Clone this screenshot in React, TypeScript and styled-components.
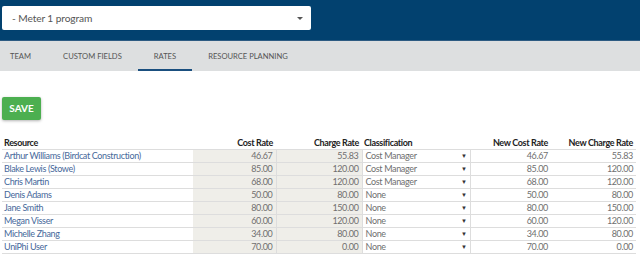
import React from "react";
import styled, { createGlobalStyle } from "styled-components";

const Global = createGlobalStyle`
  body {
    margin: 0;
    background: #fff;
    font-family: "Lato", "Open Sans", sans-serif;
  }
`;

const Header = styled.div`
  height: 41px;
  background: #02416f;
  border-bottom: 1px solid #2d5b82;
  box-sizing: border-box;
  padding: 6px 329px 0 2px;
`;

const ProgramSelect = styled.div`
  display: flex;
  align-items: center;
  height: 24px;
  background: #fff;
  border-radius: 2px;
  padding: 0 8px 0 10px;
  font-size: 10.2px;
  letter-spacing: -0.1px;
  color: #555;
`;

const Caret = styled.span`
  margin-left: auto;
  width: 0;
  height: 0;
  border-left: 3px solid transparent;
  border-right: 3px solid transparent;
  border-top: 3px solid #555;
`;

const TabBar = styled.div`
  display: flex;
  height: 30px;
  background: #dddfe0;
`;

const Tab = styled.div<{ $active?: boolean }>`
  display: flex;
  align-items: center;
  padding: 2px 16px 0;
  font-size: 7.6px;
  text-transform: uppercase;
  color: #555;
  border-bottom: 2px solid ${(p) => (p.$active ? "#1a4f7f" : "transparent")};
  box-sizing: border-box;

  &:first-child {
    padding-left: 10px;
  }
`;

const Content = styled.div`
  padding: 25px 2px 0;
`;

const SaveButton = styled.button`
  width: 39px;
  height: 23px;
  border: none;
  border-radius: 2px;
  background: #4caf50;
  color: #fff;
  font-family: "Lato", sans-serif;
  font-weight: 700;
  font-size: 10px;
  box-shadow: 0 1px 3px rgba(0, 0, 0, 0.3);
  padding: 0;
`;

const Table = styled.table`
  margin-top: 17px;
  width: 634px;
  border-collapse: collapse;
  table-layout: fixed;
  font-size: 9px;
  letter-spacing: -0.35px;
  line-height: 12px;
`;

const Th = styled.th<{ $w: number; $right?: boolean }>`
  box-sizing: border-box;
  width: ${(p) => p.$w}px;
  text-align: ${(p) => (p.$right ? "right" : "left")};
  font-weight: 700;
  color: #222;
  height: 13px;
  padding: 0 3px 0 2px;
  border-bottom: 1px solid #ddd;
  white-space: nowrap;
`;

const Td = styled.td<{ $right?: boolean; $locked?: boolean; $divider?: boolean }>`
  box-sizing: border-box;
  height: 13px;
  padding: 0 3px 0 2px;
  text-align: ${(p) => (p.$right ? "right" : "left")};
  background: ${(p) => (p.$locked ? "#efeee9" : "transparent")};
  color: #6f6f6f;
  border-bottom: 1px solid #ddd;
  border-right: ${(p) => (p.$divider ? "1px solid #ddd" : "none")};
  white-space: nowrap;
  overflow: hidden;
`;

const NameLink = styled.span`
  color: #46689a;
`;

const ClassCell = styled.div`
  display: flex;
  align-items: center;
  justify-content: space-between;
  padding: 0 0 0 1px;
`;

const SmallArrow = styled.span`
  font-size: 6px;
  color: #333;
`;

const rows = [
  ["Arthur Williams (Birdcat Construction)", "46.67", "55.83", "Cost Manager", "46.67", "55.83"],
  ["Blake Lewis (Stowe)", "85.00", "120.00", "Cost Manager", "85.00", "120.00"],
  ["Chris Martin", "68.00", "120.00", "Cost Manager", "68.00", "120.00"],
  ["Denis Adams", "50.00", "80.00", "None", "50.00", "80.00"],
  ["Jane Smith", "80.00", "150.00", "None", "80.00", "150.00"],
  ["Megan Visser", "60.00", "120.00", "None", "60.00", "120.00"],
  ["Michelle Zhang", "34.00", "80.00", "None", "34.00", "80.00"],
  ["UniPhi User", "70.00", "0.00", "None", "70.00", "0.00"],
];

const tabs = ["Team", "Custom Fields", "Rates", "Resource Planning"];

const App: React.FC = () => (
  <>
    <Global />
    <Header>
      <ProgramSelect>
        - Meter 1 program
        <Caret />
      </ProgramSelect>
    </Header>
    <TabBar>
      {tabs.map((t) => (
        <Tab key={t} $active={t === "Rates"}>
          {t}
        </Tab>
      ))}
    </TabBar>
    <Content>
      <SaveButton>SAVE</SaveButton>
      <Table>
        <thead>
          <tr>
            <Th $w={191}>Resource</Th>
            <Th $w={83} $right>Cost Rate</Th>
            <Th $w={86} $right>Charge Rate</Th>
            <Th $w={108}>Classification</Th>
            <Th $w={81} $right>New Cost Rate</Th>
            <Th $w={85} $right>New Charge Rate</Th>
          </tr>
        </thead>
        <tbody>
          {rows.map((r) => (
            <tr key={r[0]}>
              <Td>
                <NameLink>{r[0]}</NameLink>
              </Td>
              <Td $right $locked $divider>{r[1]}</Td>
              <Td $right $locked $divider>{r[2]}</Td>
              <Td $divider>
                <ClassCell>
                  {r[3]}
                  <SmallArrow>▼</SmallArrow>
                </ClassCell>
              </Td>
              <Td $right>{r[4]}</Td>
              <Td $right>{r[5]}</Td>
            </tr>
          ))}
        </tbody>
      </Table>
    </Content>
  </>
);

export default App;
